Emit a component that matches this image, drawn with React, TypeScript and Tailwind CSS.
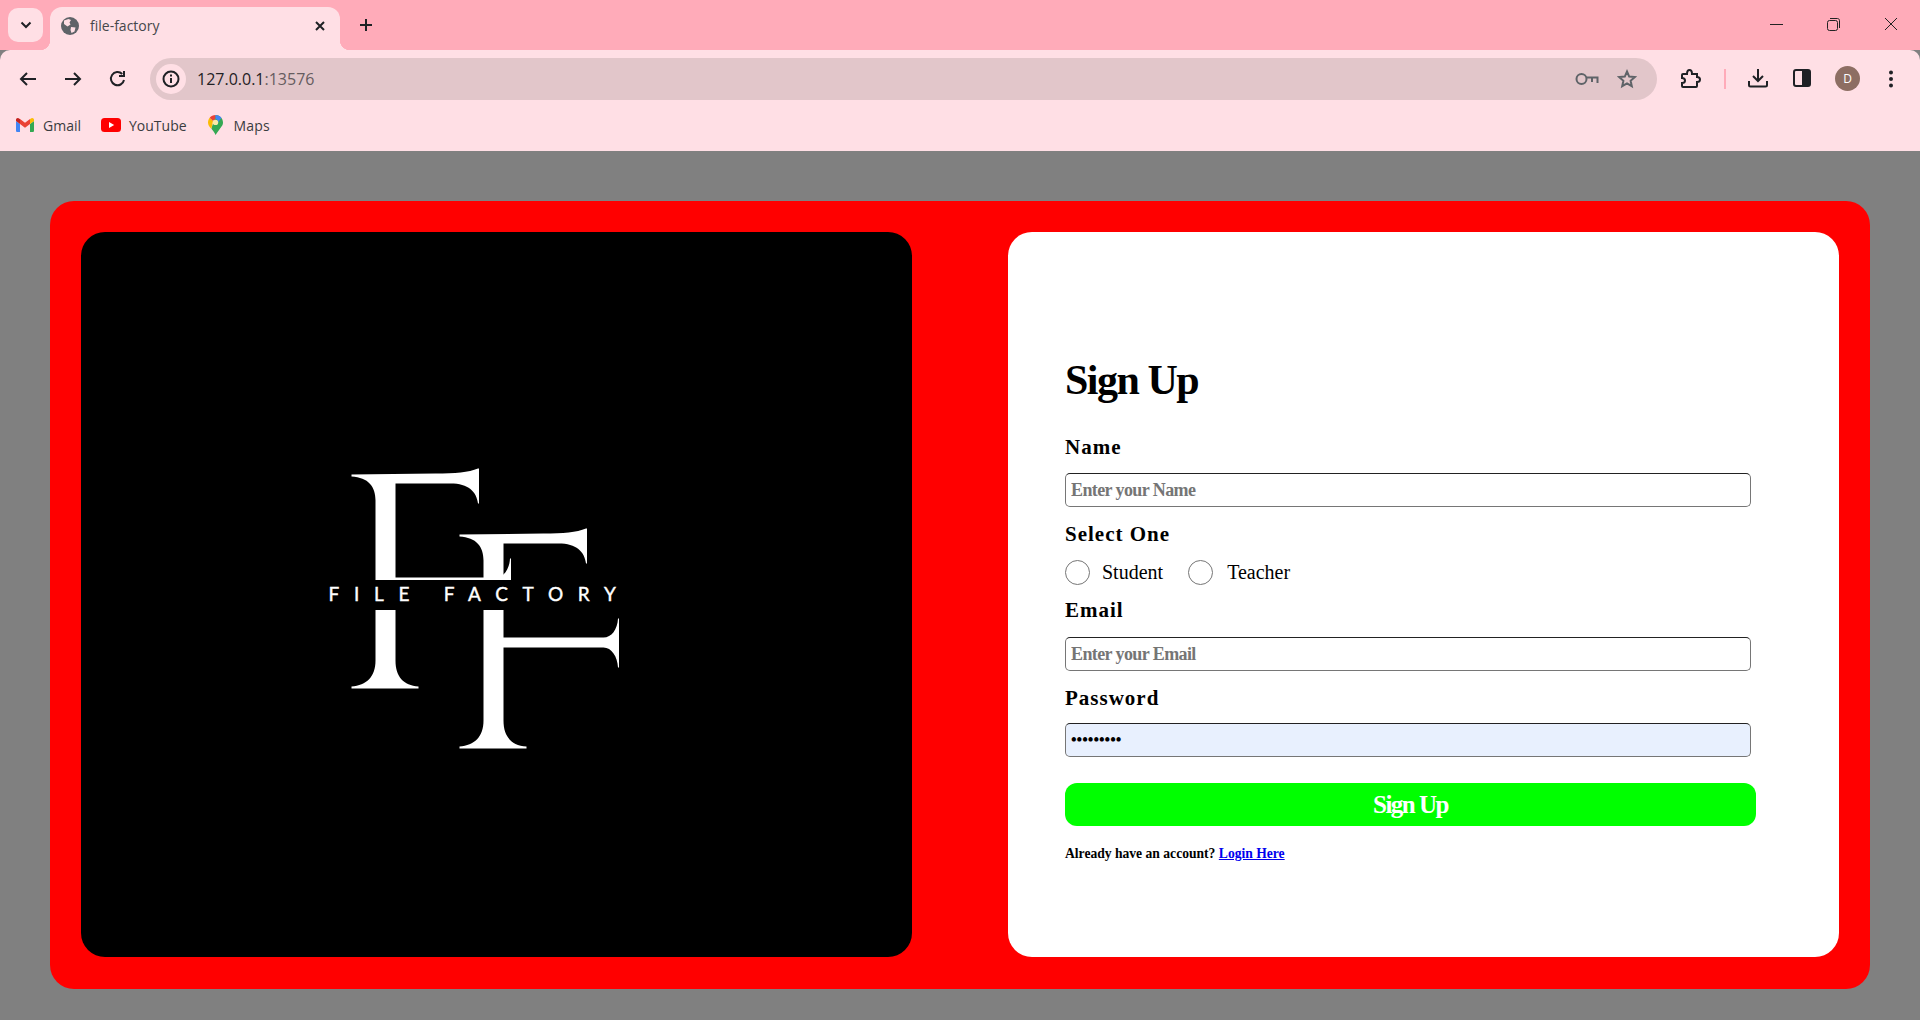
const F_PATH =
  'M351 474 L435 473 C455 473 468 472 477.5 468 L478.5 468 L478.5 503 L477.5 503 C476 491 468 483 450 483 L395 483 L395 577 L495 577 C503 577 509 569 509.5 558 L510.5 558 L510.5 607 L509.5 607 C509 596 503 587 495 587 L395 587 L395 660 C395 676 403 685 418 686 L418 688 L351 688 L351 686 C366 685 375 676 375 660 L375 500 C375 486 368 477 351 476 Z';

const Logo = () => (
  <svg width="500" height="500" viewBox="246.5 344.5 500 500">
    <path d={F_PATH} fill="#fff" />
    <path d={F_PATH} fill="#fff" transform="translate(108 60)" />
    <rect x="300" y="579.5" width="340" height="30" fill="#000" />
    <text
      x="328"
      y="600.5"
      fill="#fff"
      stroke="#fff"
      strokeWidth="0.4"
      className="text-[19px] font-normal tracking-[14.7px] [font-family:Lato,sans-serif]"
    >
      FILE FACTORY
    </text>
  </svg>
);

const Globe = () => (
  <svg width="18" height="18" viewBox="0 0 18 18">
    <circle cx="9" cy="9" r="9" fill="#5f6368" />
    <path d="M3 3.5 L7.5 2 L10 3 L8.5 5.5 L9.5 7.5 L6.5 9.5 L3 7 Z M10 10 L14.5 10.5 L13.5 14.5 L10.5 16 L9.5 13 Z" fill="#ffdfe5" />
  </svg>
);

const Gmail = () => (
  <svg width="18" height="14" viewBox="0 0 18 14">
    <path d="M0 3 L0 12.7 C0 13.4 .6 14 1.3 14 L4 14 L4 6 Z" fill="#4285f4" />
    <path d="M14 6 L14 14 L16.7 14 C17.4 14 18 13.4 18 12.7 L18 3 Z" fill="#34a853" />
    <path d="M14 1 L14 6 L18 3 L18 1.8 C18 .3 16.3 -.5 15.2 .4 Z" fill="#fbbc04" />
    <path d="M4 6 L4 1 L9 4.8 L14 1 L14 6 L9 9.8 Z" fill="#ea4335" />
    <path d="M0 1.8 L0 3 L4 6 L4 1 L2.8 .4 C1.7 -.5 0 .3 0 1.8 Z" fill="#c5221f" />
  </svg>
);

const Youtube = () => (
  <svg width="20" height="14" viewBox="0 0 20 14">
    <rect width="20" height="14" rx="3.5" fill="#f00" />
    <path d="M8 4 L13.2 7 L8 10 Z" fill="#fff" />
  </svg>
);

const Maps = () => (
  <svg width="15" height="20" viewBox="0 0 15 20">
    <path d="M7.5 0 C11.6 0 15 3.3 15 7.4 C15 9 14.4 10.2 13.5 11.5 L7.5 20 C6.7 17.5 5 15.6 3.4 13.7 Z" fill="#34a853" />
    <path d="M3.4 13.7 C1.6 11.8 0 10 0 7.4 C0 5.6 .6 4 1.7 2.7 L5 6 Z" fill="#fbbc04" />
    <path d="M1.7 2.7 C3.1 1 5.2 0 7.5 0 L7.5 3.5 L5 6 Z" fill="#ea4335" />
    <path d="M7.5 0 C9.8 0 12 1 13.4 2.8 L10 7.4 C10 5 8.5 4 7.5 4 Z" fill="#4285f4" />
    <circle cx="7.5" cy="7.4" r="2.7" fill="#fbe9a8" />
  </svg>
);

const NavIcon = ({ d }: { d: string }) => (
  <svg width="20" height="20" viewBox="0 0 20 20" fill="none" stroke="#1f2125" strokeWidth="2">
    <path d={d} />
  </svg>
);

const Field = ({ placeholder }: { placeholder: string }) => (
  <input
    placeholder={placeholder}
    className="block h-[34px] w-[686px] rounded-[5px] border border-[#767676] border-t-[#222] bg-white px-[5px] text-[18px] font-bold tracking-[-0.6px] outline-none placeholder:text-[#757575] [font-family:'Liberation_Serif',serif]"
  />
);

const Label = ({ children }: { children: string }) => (
  <label className="block text-[21px] leading-[26px] font-bold tracking-[1px] text-black">{children}</label>
);

const Radio = () => <span className="block h-[25px] w-[25px] rounded-full border border-[#767676] bg-white" />;

export default function App() {
  return (
    <div className="flex h-[1020px] flex-col overflow-hidden bg-[#808080] [font-family:'Liberation_Serif',serif]">
      <div className="flex h-[50px] shrink-0 items-end bg-[#ffabb9] pl-[8px]">
        <div className="mb-[8px] flex h-[34px] w-[35px] items-center justify-center rounded-[10px] bg-[#ffdfe5]">
          <svg width="12" height="8" viewBox="0 0 12 8" fill="none" stroke="#1f2125" strokeWidth="2">
            <path d="M1.5 1.5 L6 6 L10.5 1.5" />
          </svg>
        </div>
        <div className="relative ml-[7px] flex h-[43px] w-[290px] items-center rounded-t-[12px] bg-[#ffdfe5] pr-[14px] pl-[11px] pb-[6px]">
          <span className="absolute -bottom-0 -left-[10px] h-[10px] w-[10px] bg-[radial-gradient(circle_at_0_0,#ffabb9_10px,#ffdfe5_10.5px)]" />
          <span className="absolute -right-[10px] -bottom-0 h-[10px] w-[10px] bg-[radial-gradient(circle_at_100%_0,#ffabb9_10px,#ffdfe5_10.5px)]" />
          <Globe />
          <span className="ml-[11px] flex-1 text-[14px] text-[#45474b] [font-family:'Open_Sans',sans-serif]">file-factory</span>
          <svg width="12" height="12" viewBox="0 0 12 12" stroke="#1f2125" strokeWidth="2">
            <path d="M2 2 L10 10 M10 2 L2 10" />
          </svg>
        </div>
        <svg className="mb-[18px] ml-[19px]" width="14" height="14" viewBox="0 0 14 14" stroke="#1f2125" strokeWidth="2">
          <path d="M7 1 L7 13 M1 7 L13 7" />
        </svg>
        <div className="mb-[19px] ml-auto flex items-center gap-[43px] pr-[22px]">
          <span className="block h-[1px] w-[13px] bg-[#222]" />
          <svg className="ml-[1px]" width="13" height="13" viewBox="0 0 13 13" fill="none" stroke="#222" strokeWidth="1">
            <rect x=".5" y="2.5" width="10" height="10" rx="2" />
            <path d="M3 .5 L10.5 .5 C11.6 .5 12.5 1.4 12.5 2.5 L12.5 10" />
          </svg>
          <svg className="ml-[1px]" width="14" height="14" viewBox="0 0 14 14" stroke="#222" strokeWidth="1">
            <path d="M1 1 L13 13 M13 1 L1 13" />
          </svg>
        </div>
      </div>

      <div className="flex h-[62px] shrink-0 items-start rounded-t-[10px] bg-[#ffdfe5] pt-[8px] pl-[18px]">
        <div className="mt-[11px]">
          <NavIcon d="M18 10 L3 10 M9 4 L3 10 L9 16" />
        </div>
        <div className="mt-[11px] ml-[25px]">
          <NavIcon d="M2 10 L17 10 M11 4 L17 10 L11 16" />
        </div>
        <div className="mt-[11px] ml-[25px]">
          <NavIcon d="M16 11 A6.6 6.6 0 1 1 14.2 5 M16 2 L16 7 L11 7" />
        </div>
        <div className="ml-[22px] flex h-[42px] w-[1507px] items-center rounded-full bg-[#e2c6ca] pl-[6px]">
          <div className="flex h-[30px] w-[30px] items-center justify-center rounded-full bg-[#ffdfe5]">
            <svg width="18" height="18" viewBox="0 0 18 18" fill="none" stroke="#1f2125" strokeWidth="2">
              <circle cx="9" cy="9" r="7.5" />
              <path d="M9 8 L9 13 M9 4.5 L9 6.5" />
            </svg>
          </div>
          <span className="ml-[11px] text-[16px] text-[#1f2125] [font-family:'Open_Sans',sans-serif]">
            127.0.0.1<span className="text-[#665c5f]">:13576</span>
          </span>
          <div className="mr-[20px] ml-auto flex items-center gap-[18px]">
            <svg width="24" height="14" viewBox="0 0 24 14" fill="none" stroke="#5f6368" strokeWidth="2">
              <circle cx="6.5" cy="7" r="5" />
              <path d="M11.5 5.5 L22.5 5.5 L22.5 11 M17 5.5 L17 10" />
            </svg>
            <svg width="20" height="20" viewBox="0 0 20 20" fill="none" stroke="#5f6368" strokeWidth="2">
              <path d="M10 2.5 L12.2 7.6 L17.8 8.1 L13.6 11.8 L14.8 17.2 L10 14.4 L5.2 17.2 L6.4 11.8 L2.2 8.1 L7.8 7.6 Z" />
            </svg>
          </div>
        </div>
        <svg className="mt-[10px] ml-[23px]" width="21" height="21" viewBox="0 0 21 21" fill="none" stroke="#1f2125" strokeWidth="2">
          <path d="M3 6 L7 6 C7 3 8 2 9.5 2 C11 2 12 3 12 6 L17 6 L17 9 C19 9 20 10 20 11.5 C20 13 19 14 17 14 L17 18 C17 18.6 16.6 19 16 19 L3 19 C2.4 19 2 18.6 2 18 L2 15 C4.5 15 5 14 5 12.5 C5 11 4.5 10 2 10 L2 7 C2 6.4 2.4 6 3 6 Z" />
        </svg>
        <span className="mt-[11px] ml-[23px] block h-[20px] w-[2px] bg-[#ffabb9]" />
        <svg className="mt-[10px] ml-[22px]" width="20" height="20" viewBox="0 0 20 20" fill="none" stroke="#1f2125" strokeWidth="2">
          <path d="M10 1 L10 12 M5 8 L10 13 L15 8 M1 13 L1 17 C1 18 1.5 18.5 2.5 18.5 L17.5 18.5 C18.5 18.5 19 18 19 17 L19 13" />
        </svg>
        <svg className="mt-[11px] ml-[25px]" width="18" height="18" viewBox="0 0 18 18">
          <rect x="1" y="1" width="16" height="16" rx="2" fill="none" stroke="#1f2125" strokeWidth="2" />
          <rect x="9" y="1" width="8" height="16" fill="#1f2125" />
        </svg>
        <div className="mt-[8px] ml-[24px] flex h-[25px] w-[25px] items-center justify-center rounded-full bg-[#8d6e63] text-[12px] text-white [font-family:'Open_Sans',sans-serif]">
          D
        </div>
        <svg className="mt-[12px] ml-[29px]" width="4" height="18" viewBox="0 0 4 18" fill="#1f2125">
          <circle cx="2" cy="2.5" r="2" />
          <circle cx="2" cy="9" r="2" />
          <circle cx="2" cy="15.5" r="2" />
        </svg>
      </div>

      <div className="flex h-[39px] shrink-0 items-center bg-[#ffdfe5] pb-[13px] pl-[16px] text-[14px] text-[#3a3c40] [font-family:'Open_Sans',sans-serif]">
        <Gmail />
        <span className="ml-[9px]">Gmail</span>
        <div className="ml-[20px]">
          <Youtube />
        </div>
        <span className="ml-[8px]">YouTube</span>
        <div className="ml-[21px]">
          <Maps />
        </div>
        <span className="ml-[11px] tracking-[0.2px]">Maps</span>
      </div>

      <main className="flex-1 px-[50px] pt-[50px]">
        <div className="flex h-[788px] justify-between rounded-[24px] bg-[#ff0000] px-[31px] pt-[31px] pb-[32px]">
          <div className="flex w-[831px] items-center justify-center rounded-[24px] bg-black">
            <Logo />
          </div>
          <div className="w-[831px] rounded-[24px] bg-white pt-[123px] pl-[57px]">
            <h1 className="text-[42px] leading-[50px] font-bold tracking-[-1.5px] text-black">Sign Up</h1>
            <div className="mt-[29px]">
              <Label>Name</Label>
            </div>
            <div className="mt-[13px]">
              <Field placeholder="Enter your Name" />
            </div>
            <div className="mt-[14px]">
              <Label>Select One</Label>
            </div>
            <div className="mt-[13px] flex items-center text-[20px] leading-[25px] text-black">
              <Radio />
              <span className="ml-[12px]">Student</span>
              <div className="ml-[25px]">
                <Radio />
              </div>
              <span className="ml-[14px]">Teacher</span>
            </div>
            <div className="mt-[12px]">
              <Label>Email</Label>
            </div>
            <div className="mt-[14px]">
              <Field placeholder="Enter your Email" />
            </div>
            <div className="mt-[14px]">
              <Label>Password</Label>
            </div>
            <div className="mt-[12px]">
              <input
                readOnly
                type="password"
                value="123456789"
                className="block h-[34px] w-[686px] rounded-[5px] border border-[#767676] border-t-[#222] bg-[#e8f0fe] px-[5px] text-[16px] font-bold outline-none"
              />
            </div>
            <button className="mt-[26px] block h-[43px] w-[691px] rounded-[12px] bg-[#00ff00] text-[25px] font-bold tracking-[-1.5px] text-white">
              Sign Up
            </button>
            <p className="mt-[20px] text-[13.6px] leading-[16px] font-bold text-black">
              Already have an account?{' '}
              <a href="#" className="text-[#0000ee] underline">
                Login Here
              </a>
            </p>
          </div>
        </div>
      </main>
    </div>
  );
}
